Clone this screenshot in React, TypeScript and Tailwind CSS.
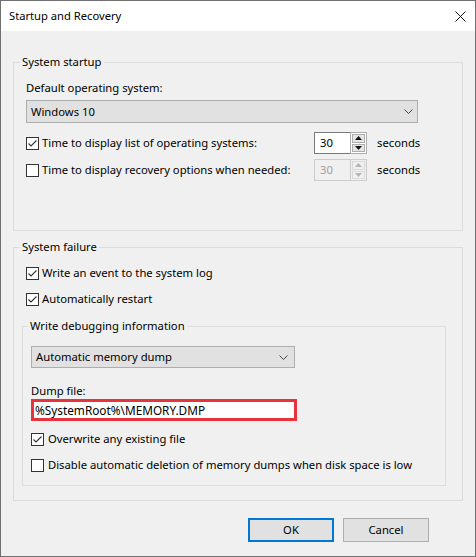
import React from "react";

const font = { fontFamily: '"Noto Sans", "Segoe UI", Arial, sans-serif' };

function CheckBox({ checked }: { checked: boolean }) {
  return (
    <span className="flex h-[13px] w-[13px] shrink-0 items-center justify-center border border-[#333333] bg-white">
      {checked && (
        <svg width="11" height="11" viewBox="0 0 11 11" className="block">
          <polyline points="1.5,5.5 4,8 9.5,2.5" fill="none" stroke="#333333" strokeWidth="1.1" />
        </svg>
      )}
    </span>
  );
}

function CheckRow({ checked, label, gap = "gap-[3px]" }: { checked: boolean; label: string; gap?: string }) {
  return (
    <div className={`flex h-[16px] items-center ${gap}`}>
      <CheckBox checked={checked} />
      <span className="leading-[16px] whitespace-nowrap">{label}</span>
    </div>
  );
}

function Chevron() {
  return (
    <svg width="9" height="5" viewBox="0 0 9 5" className="block">
      <polyline points="0.5,0.5 4.5,4.5 8.5,0.5" fill="none" stroke="#444444" strokeWidth="1" />
    </svg>
  );
}

function Arrow({ up, color }: { up: boolean; color: string }) {
  return (
    <svg width="7" height="4" viewBox="0 0 7 4" className="block">
      {up ? <polygon points="0,4 7,4 3.5,0" fill={color} /> : <polygon points="0,0 7,0 3.5,4" fill={color} />}
    </svg>
  );
}

function Spinner({ disabled }: { disabled?: boolean }) {
  const arrow = disabled ? "#b5b5b5" : "#111111";
  return (
    <div className="flex h-[22px] w-[53px]">
      <div
        className={
          disabled
            ? "flex w-[36px] items-center border border-r-0 border-[#cccccc] bg-[#f0f0f0] pl-[5px] text-[#a0a0a0]"
            : "flex w-[36px] items-center border border-r-0 border-[#7a7a7a] bg-white pl-[5px]"
        }
      >
        30
      </div>
      <div
        className={
          disabled
            ? "flex w-[17px] flex-col gap-[1px] border border-[#cccccc] bg-[#f0f0f0] p-[1px]"
            : "flex w-[17px] flex-col gap-[1px] border border-[#adadad] bg-white p-[1px]"
        }
      >
        <div
          className={
            disabled
              ? "flex flex-1 items-center justify-center border border-[#d9d9d9] bg-[#f0f0f0]"
              : "flex flex-1 items-center justify-center border border-[#adadad] bg-[#e5e5e5]"
          }
        >
          <Arrow up color={arrow} />
        </div>
        <div
          className={
            disabled
              ? "flex flex-1 items-center justify-center border border-[#d9d9d9] bg-[#f0f0f0]"
              : "flex flex-1 items-center justify-center border border-[#adadad] bg-[#e5e5e5]"
          }
        >
          <Arrow up={false} color={arrow} />
        </div>
      </div>
    </div>
  );
}

export default function App() {
  return (
    <div
      style={font}
      className="flex h-[557px] w-[476px] flex-col border border-[#707070] bg-[#f0f0f0] text-[11.25px] leading-[16px] text-black"
    >
      {/* Title bar */}
      <div className="flex h-[30px] shrink-0 items-center justify-between bg-white pl-[8px] pr-[9px]">
        <span className="text-[11.2px]">Startup and Recovery</span>
        <svg width="11" height="11" viewBox="0 0 11 11" className="block">
          <path d="M0.5 0.5 L10.5 10.5 M10.5 0.5 L0.5 10.5" stroke="#111111" strokeWidth="1" />
        </svg>
      </div>

      <div className="flex flex-col px-[12px]">
        {/* System startup */}
        <fieldset className="mt-[23px] border border-[#dcdcdc] px-0 pb-[49px] pt-[10px]">
          <legend className="ml-[6px] px-[2px] leading-[16px]">System startup</legend>
          <div className="flex flex-col px-[12px]">
            <div className="leading-[16px]">Default operating system:</div>
            <div className="mt-[4px] flex h-[23px] w-[392px] items-center justify-between border border-[#adadad] bg-[#e1e1e1] pl-[4px] pr-[4px]">
              <span>Windows 10</span>
              <Chevron />
            </div>
            <div className="mt-[9px] flex items-center">
              <div className="w-[288px]">
                <CheckRow checked label="Time to display list of operating systems:" />
              </div>
              <Spinner />
              <span className="ml-[10px]">seconds</span>
            </div>
            <div className="mt-[5px] flex items-center">
              <div className="w-[288px]">
                <CheckRow checked={false} label="Time to display recovery options when needed:" />
              </div>
              <Spinner disabled />
              <span className="ml-[10px]">seconds</span>
            </div>
          </div>
        </fieldset>

        {/* System failure */}
        <fieldset className="mt-[8px] border border-[#dcdcdc] px-0 pb-[14px] pt-[10px]">
          <legend className="ml-[6px] px-[2px] leading-[16px]">System failure</legend>
          <div className="flex flex-col pl-[8px] pr-[16px]">
            <div className="ml-[4px]">
              <CheckRow checked label="Write an event to the system log" />
            </div>
            <div className="ml-[4px] mt-[10px]">
              <CheckRow checked label="Automatically restart" />
            </div>

            <fieldset className="mt-[11px] border border-[#dcdcdc] px-0 pb-[12px] pt-[12px]">
              <legend className="ml-[5px] px-[2px] leading-[16px]">Write debugging information</legend>
              <div className="flex flex-col px-[8px]">
                <div className="flex h-[22px] w-[264px] items-center justify-between border border-[#adadad] bg-[#e1e1e1] pl-[4px] pr-[6px]">
                  <span>Automatic memory dump</span>
                  <Chevron />
                </div>
                <div className="mt-[15px] leading-[16px]">Dump file:</div>
                <div className="flex h-[22px] w-[266px] items-center border-[3px] border-[#e8333c] bg-white pl-[1px] text-[11.8px]">
                  %SystemRoot%\MEMORY.DMP
                </div>
                <div className="mt-[10px]">
                  <CheckRow checked label="Overwrite any existing file" gap="gap-[4px]" />
                </div>
                <div className="mt-[10px]">
                  <CheckRow
                    checked={false}
                    label="Disable automatic deletion of memory dumps when disk space is low"
                    gap="gap-[4px]"
                  />
                </div>
              </div>
            </fieldset>
          </div>
        </fieldset>

        {/* Dialog buttons */}
        <div className="mt-[17px] flex justify-end gap-[9px] pr-[34px]">
          <button className="flex h-[24px] w-[86px] items-center justify-center border-2 border-[#0078d7] bg-[#e1e1e1]">
            OK
          </button>
          <button className="flex h-[24px] w-[86px] items-center justify-center border border-[#adadad] bg-[#e1e1e1]">
            Cancel
          </button>
        </div>
      </div>
    </div>
  );
}
